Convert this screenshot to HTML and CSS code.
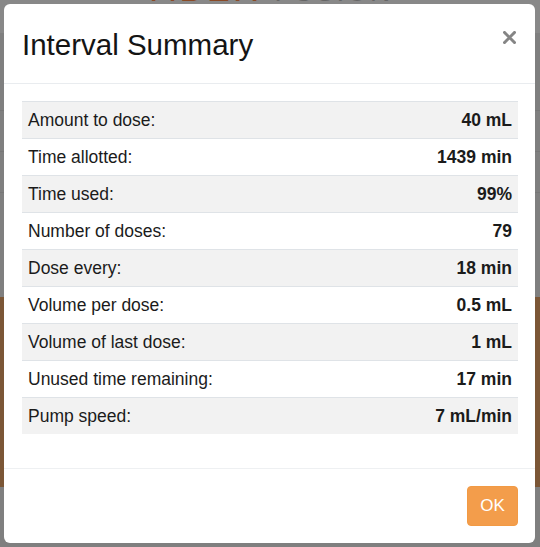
FILE: index.html
```html
<!DOCTYPE html>
<html>
<head>
<meta charset="utf-8">
<link rel="stylesheet" href="styles.css">
</head>
<body>
<div class="page">
  <div class="topbar">
    <div class="logo"><span class="logo-main">ABEX</span><span class="logo-sub">FUSION</span></div>
  </div>
  <div class="content">
    <div class="line"></div>
    <div class="line"></div>
    <div class="line"></div>
  </div>
  <div class="band"></div>
  <div class="bottom"></div>
</div>

<div class="modal">
  <div class="modal-header">
    <h1 class="modal-title">Interval Summary</h1>
    <button class="close" aria-label="Close">
      <svg width="13" height="13" viewBox="0 0 13 13"><path d="M1.5 1.5 L11.5 11.5 M11.5 1.5 L1.5 11.5" stroke="#858585" stroke-width="3" stroke-linecap="square"/></svg>
    </button>
  </div>
  <div class="modal-body">
    <table class="summary">
      <tr><td>Amount to dose:</td><td class="val">40 mL</td></tr>
      <tr><td>Time allotted:</td><td class="val">1439 min</td></tr>
      <tr><td>Time used:</td><td class="val">99%</td></tr>
      <tr><td>Number of doses:</td><td class="val">79</td></tr>
      <tr><td>Dose every:</td><td class="val">18 min</td></tr>
      <tr><td>Volume per dose:</td><td class="val">0.5 mL</td></tr>
      <tr><td>Volume of last dose:</td><td class="val">1 mL</td></tr>
      <tr><td>Unused time remaining:</td><td class="val">17 min</td></tr>
      <tr><td>Pump speed:</td><td class="val">7 mL/min</td></tr>
    </table>
  </div>
  <div class="modal-footer">
    <button class="btn-ok">OK</button>
  </div>
</div>
</body>
</html>
```

FILE: styles.css
```css
html, body {
  margin: 0;
  padding: 0;
}
body {
  width: 540px;
  height: 547px;
  overflow: hidden;
  background: #7f7f7f;
  font-family: "Liberation Sans", Arial, sans-serif;
  position: relative;
}
.page {
  display: flex;
  flex-direction: column;
}
.topbar {
  height: 33px;
  background: #888888;
  display: flex;
  justify-content: center;
  overflow: hidden;
}
.logo {
  margin-top: -28px;
  font-size: 34px;
  line-height: 34px;
  display: flex;
  align-items: baseline;
  gap: 12px;
  padding-left: 4px;
}
.logo-main {
  color: #8a4a26;
  letter-spacing: 5px;
}
.logo-sub {
  color: #666666;
  font-size: 28px;
  letter-spacing: 2px;
}
.content {
  height: 264px;
  box-sizing: border-box;
  display: flex;
  flex-direction: column;
  padding-top: 77px;
  gap: 40px;
}
.line {
  height: 1px;
  background: #777777;
}
.band {
  height: 190px;
  background: #7b5636;
}
.bottom {
  height: 60px;
  background: #7f7f7f;
}

.modal {
  position: absolute;
  top: 4px;
  left: 4px;
  width: 531px;
  height: 539px;
  background: #ffffff;
  border-radius: 6px;
  display: flex;
  flex-direction: column;
  box-sizing: border-box;
  color: #1b1b1b;
}
.modal-header {
  height: 80px;
  box-sizing: border-box;
  border-bottom: 1px solid #e9ecef;
  display: flex;
  align-items: flex-start;
  justify-content: space-between;
  padding: 23px 18px 0 18px;
}
.modal-title {
  margin: 0;
  font-size: 29.5px;
  font-weight: 400;
  line-height: 36px;
  color: #141414;
}
.close {
  border: 0;
  background: none;
  padding: 0;
  margin: 4px 1px 0 0;
  width: 13px;
  height: 13px;
  display: flex;
}
.modal-body {
  padding: 17px 17px 34px 18px;
}
.summary {
  width: 100%;
  border-collapse: collapse;
  font-size: 17.5px;
}
.summary td {
  border-top: 1px solid #dfe3e7;
  padding: 0 6px;
  height: 36px;
  line-height: 20px;
  color: #1b1b1b;
}
.summary tr:nth-child(odd) td {
  background: #f2f2f2;
}
.summary .val {
  text-align: right;
  font-weight: 700;
}
.modal-footer {
  border-top: 1px solid #eef0f2;
  padding: 17px 17px 17px 18px;
  display: flex;
  justify-content: flex-end;
}
.btn-ok {
  width: 51px;
  height: 40px;
  border: 1px solid #f29a44;
  border-radius: 4px;
  background: #f39d4b;
  color: #ffffff;
  font-family: "Liberation Sans", Arial, sans-serif;
  font-size: 17px;
  padding: 0;
}
```
